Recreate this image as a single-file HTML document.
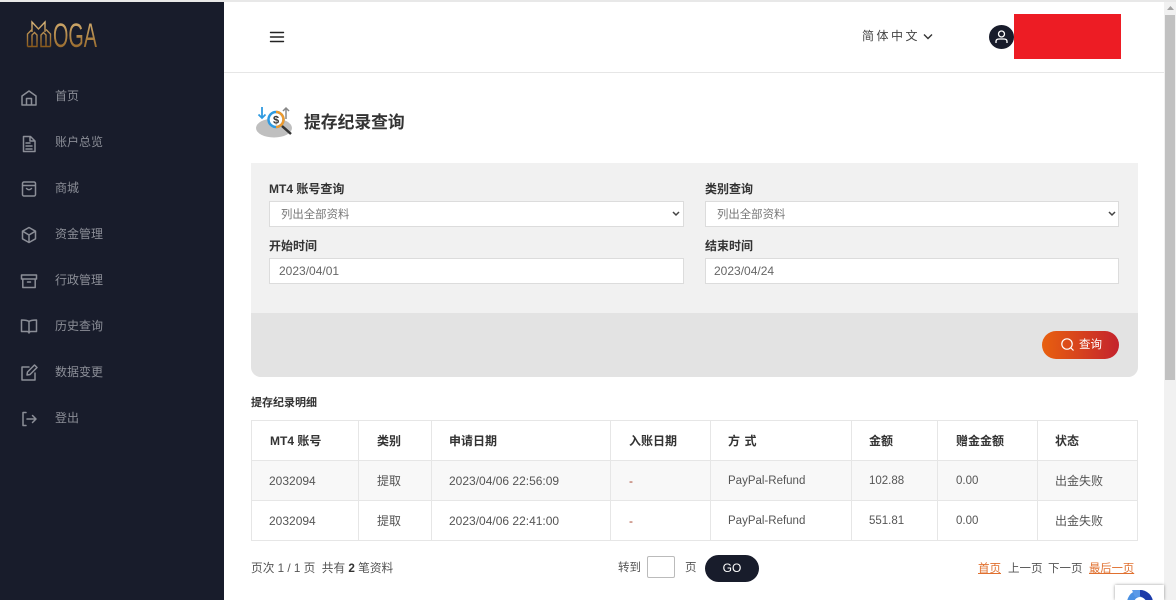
<!DOCTYPE html>
<html><head><meta charset="utf-8"><style>
*{box-sizing:border-box}
html,body{margin:0;padding:0;width:1176px;height:600px;overflow:hidden;background:#fff;font-family:"Liberation Sans","Noto Sans CJK SC",sans-serif;color:#555;font-size:12px}
.a{position:absolute;white-space:nowrap;line-height:16px}
.nav{color:#8b8e97;left:55px}
svg.i{position:absolute;left:20px;fill:none;stroke:#8b8e97;stroke-width:1.5;stroke-linecap:round;stroke-linejoin:round}
.l{position:absolute;background:#e6e6e6}
.th{font-weight:bold;color:#333}
.lb{font-weight:bold;color:#333}
.inp{position:absolute;background:#fff;border:1px solid #dcdcdc;height:27px;width:415px}
</style></head><body>
<div style="position:absolute;left:0;top:0;width:1176px;height:2px;background:#e8e8e8"></div>
<div style="position:absolute;left:0;top:2px;width:224px;height:598px;background:#181c2b"></div>
<svg style="position:absolute;left:26px;top:20px" width="72" height="28" viewBox="0 0 72 28"><defs><linearGradient id="g" x1="0" y1="0" x2="0" y2="1"><stop offset="0" stop-color="#d9b578"/><stop offset="1" stop-color="#8a5a1c"/></linearGradient></defs><path d="M1.500 26.500V14L6 9.500M6 26.500V15L8.500 12.500L11 15V26.500H1.500M6 12V2L12.500 9L19 2V12M24.500 26.500V14L20 9.500M20 26.500V15L17.500 12.500L15 15V26.500H24.500" fill="none" stroke="url(#g)" stroke-width="1.400"/><text x="27" y="27" font-family="Liberation Sans" font-size="34" fill="url(#g)" textLength="44" lengthAdjust="spacingAndGlyphs">OGA</text></svg>

<svg class="i" style="top:89px" width="18" height="18" viewBox="0 0 18 18"><path d="M2 16V7L9 2l7 5v9zM6.500 16V9.500h5V16"/></svg>
<div class="a nav" style="top:88px">首页</div>
<svg class="i" style="top:135px" width="18" height="18" viewBox="0 0 18 18"><path d="M3.500 1.500h7L15 6v10.500H3.500zM10 2v4h5M6 8h4M6 11h6M6 14h6"/></svg>
<div class="a nav" style="top:134px">账户总览</div>
<svg class="i" style="top:180px" width="18" height="18" viewBox="0 0 18 18"><rect x="2.500" y="2" width="13" height="14" rx="1.500"/><path d="M3 5.500h12M6.500 8.500q2.500 2.500 5 0"/></svg>
<div class="a nav" style="top:180px">商城</div>
<svg class="i" style="top:226px" width="18" height="18" viewBox="0 0 18 18"><path d="M9 1.500l6.500 3.700v7.600L9 16.500l-6.500-3.700V5.200zM2.800 5.300L9 9l6.200-3.700M9 9v7.300"/></svg>
<div class="a nav" style="top:226px">资金管理</div>
<svg class="i" style="top:272px" width="18" height="18" viewBox="0 0 18 18"><path d="M1.500 3h15v4h-15zM2.800 7v8.500h12.400V7M7.500 10h3"/></svg>
<div class="a nav" style="top:272px">行政管理</div>
<svg class="i" style="top:317px" width="18" height="18" viewBox="0 0 18 18"><path d="M9 4.500Q7 3 1.500 3v11.500H7q2 0 2 1.500 0-1.500 2-1.500h5.500V3Q11 3 9 4.500zV15"/></svg>
<div class="a nav" style="top:318px">历史查询</div>
<svg class="i" style="top:364px" width="18" height="18" viewBox="0 0 18 18"><path d="M9 3H2v13h13V9M7 11l.5-3L14.500 1l2.500 2.500L10 10.500z"/></svg>
<div class="a nav" style="top:364px">数据变更</div>
<svg class="i" style="top:410px" width="18" height="18" viewBox="0 0 18 18"><path d="M6 2.500H3v13h3M7 9h9M12.500 5.500L16 9l-3.500 3.500"/></svg>
<div class="a nav" style="top:410px">登出</div>

<div class="l" style="left:224px;top:72px;width:940px;height:1px"></div>
<svg style="position:absolute;left:269px;top:30px" width="16" height="14" viewBox="0 0 16 14"><path d="M1.500 2.500h13M1.500 7h13M1.500 11.500h13" stroke="#222" stroke-width="1.400" stroke-linecap="round"/></svg>
<div class="a" style="left:862px;top:28px;color:#444;letter-spacing:2.500px">简体中文</div>
<svg style="position:absolute;left:923px;top:33px" width="10" height="8" viewBox="0 0 10 8"><path d="M1 1.500l4 4 4-4" fill="none" stroke="#333" stroke-width="1.400"/></svg>
<div style="position:absolute;left:989px;top:25px;width:25px;height:24px;border-radius:50%;background:#181c2b"></div>
<svg style="position:absolute;left:994px;top:29px" width="15" height="16" viewBox="0 0 15 16"><circle cx="7.500" cy="5" r="3" fill="none" stroke="#fff" stroke-width="1.300"/><path d="M2 14v-1.500Q2 10 5 10h5q3 0 3 2.500V14" fill="none" stroke="#fff" stroke-width="1.300"/></svg>
<div style="position:absolute;left:1014px;top:14px;width:107px;height:45px;background:#ed1c24"></div>

<svg style="position:absolute;left:255px;top:104px" width="40" height="36" viewBox="0 0 40 36">
<ellipse cx="19" cy="24" rx="18" ry="9.500" fill="#bfbfbf"/>
<path d="M7 3v11M3.500 10.500L7 14l3.500-3.500" fill="none" stroke="#2f9ae0" stroke-width="1.800"/>
<path d="M31 15V4M28 7l3-3 3 3" fill="none" stroke="#888" stroke-width="1.500"/>
<circle cx="21" cy="15.500" r="7.500" fill="#fff" stroke="#2f9ae0" stroke-width="2.500"/>
<path d="M21 8a7.500 7.500 0 0 1 0 15" fill="none" stroke="#ee9a2e" stroke-width="2.500"/>
<text x="21" y="19.500" text-anchor="middle" font-size="11" font-weight="bold" fill="#333" font-family="Liberation Sans">$</text>
<path d="M27 22l9 8" stroke="#333" stroke-width="2.500"/>
</svg>
<div class="a" style="left:304px;top:111px;font-size:16.800px;line-height:24px;font-weight:bold;color:#333">提存纪录查询</div>

<div style="position:absolute;left:251px;top:163px;width:887px;height:214px;background:#f1f1f1;border-radius:0 0 10px 10px;overflow:hidden"><div style="position:absolute;left:0;top:150px;width:887px;height:64px;background:#e3e3e3"></div></div>
<div class="a lb" style="left:269px;top:181px">MT4 账号查询</div>
<div class="a lb" style="left:705px;top:181px">类别查询</div>
<div class="inp" style="left:269px;top:201px;height:26px"></div>
<div class="inp" style="left:705px;top:201px;width:414px;height:26px"></div>
<div class="a" style="left:281px;top:207px;color:#777;font-size:11.400px">列出全部资料</div>
<div class="a" style="left:717px;top:207px;color:#777;font-size:11.400px">列出全部资料</div>
<svg style="position:absolute;left:672px;top:211px" width="8" height="6" viewBox="0 0 8 6"><path d="M1 1l3 3 3-3" fill="none" stroke="#444" stroke-width="1.500"/></svg>
<svg style="position:absolute;left:1108px;top:211px" width="8" height="6" viewBox="0 0 8 6"><path d="M1 1l3 3 3-3" fill="none" stroke="#444" stroke-width="1.500"/></svg>
<div class="a lb" style="left:269px;top:238px">开始时间</div>
<div class="a lb" style="left:705px;top:238px">结束时间</div>
<div class="inp" style="left:269px;top:258px;height:26px"></div>
<div class="inp" style="left:705px;top:258px;width:414px;height:26px"></div>
<div class="a" style="left:279px;top:263px;color:#666">2023/04/01</div>
<div class="a" style="left:714px;top:263px;color:#666">2023/04/24</div>

<div style="position:absolute;left:1042px;top:331px;width:77px;height:28px;border-radius:14px;background:linear-gradient(90deg,#e8600f,#c4232d)"></div>
<svg style="position:absolute;left:1060px;top:337px" width="15" height="15" viewBox="0 0 15 15"><circle cx="7" cy="7" r="5.200" fill="none" stroke="#fff" stroke-width="1.200"/><path d="M11 11l2.500 2.500" stroke="#fff" stroke-width="1.200"/></svg>
<div class="a" style="left:1079px;top:337px;color:#fff;font-size:11.500px">查询</div>

<div class="a lb" style="left:251px;top:395px;font-size:11px">提存纪录明细</div>

<div style="position:absolute;left:251px;top:461px;width:887px;height:39px;background:#f8f8f8"></div>
<div class="l" style="left:251px;top:420px;width:887px;height:1px"></div>
<div class="l" style="left:251px;top:460px;width:887px;height:1px"></div>
<div class="l" style="left:251px;top:500px;width:887px;height:1px"></div>
<div class="l" style="left:251px;top:540px;width:887px;height:1px"></div>
<div class="l" style="left:251px;top:420px;width:1px;height:121px"></div>
<div class="l" style="left:358px;top:420px;width:1px;height:121px"></div>
<div class="l" style="left:431px;top:420px;width:1px;height:121px"></div>
<div class="l" style="left:610px;top:420px;width:1px;height:121px"></div>
<div class="l" style="left:710px;top:420px;width:1px;height:121px"></div>
<div class="l" style="left:851px;top:420px;width:1px;height:121px"></div>
<div class="l" style="left:937px;top:420px;width:1px;height:121px"></div>
<div class="l" style="left:1037px;top:420px;width:1px;height:121px"></div>
<div class="l" style="left:1137px;top:420px;width:1px;height:121px"></div>

<div class="a th" style="left:270px;top:433px">MT4 账号</div>
<div class="a th" style="left:377px;top:433px">类别</div>
<div class="a th" style="left:449px;top:433px">申请日期</div>
<div class="a th" style="left:629px;top:433px">入账日期</div>
<div class="a th" style="left:728px;top:433px;letter-spacing:.6px">方 式</div>
<div class="a th" style="left:869px;top:433px">金额</div>
<div class="a th" style="left:956px;top:433px">赠金金额</div>
<div class="a th" style="left:1055px;top:433px">状态</div>

<div class="a" style="left:269px;top:473px">2032094</div>
<div class="a" style="left:377px;top:473px">提取</div>
<div class="a" style="left:449px;top:473px">2023/04/06 22:56:09</div>
<div class="a" style="left:629px;top:473px;color:#a5402a">-</div>
<div class="a" style="left:728px;top:473px;font-size:11.500px">PayPal-Refund</div>
<div class="a" style="left:869px;top:473px;font-size:11.500px">102.88</div>
<div class="a" style="left:956px;top:473px;font-size:11.500px">0.00</div>
<div class="a" style="left:1055px;top:473px">出金失败</div>

<div class="a" style="left:269px;top:513px">2032094</div>
<div class="a" style="left:377px;top:513px">提取</div>
<div class="a" style="left:449px;top:513px">2023/04/06 22:41:00</div>
<div class="a" style="left:629px;top:513px;color:#a5402a">-</div>
<div class="a" style="left:728px;top:513px;font-size:11.500px">PayPal-Refund</div>
<div class="a" style="left:869px;top:513px;font-size:11.500px">551.81</div>
<div class="a" style="left:956px;top:513px;font-size:11.500px">0.00</div>
<div class="a" style="left:1055px;top:513px">出金失败</div>

<div class="a" style="left:251px;top:561px;font-size:11.700px">页次 1 / 1 页&nbsp; 共有 <b style="color:#333">2</b> 笔资料</div>
<div class="a" style="left:618px;top:560px;font-size:11.500px">转到</div>
<div style="position:absolute;left:647px;top:556px;width:28px;height:22px;border:1px solid #bbb;border-radius:2px;background:#fff"></div>
<div class="a" style="left:685px;top:560px;font-size:11.500px">页</div>
<div class="a" style="left:705px;top:555px;width:54px;height:27px;border-radius:14px;background:#181c2b;color:#fff;text-align:center;line-height:27px">GO</div>
<div class="a" style="left:978px;top:561px;font-size:11.500px;color:#e0702f;text-decoration:underline">首页</div>
<div class="a" style="left:1008px;top:561px;font-size:11.500px">上一页</div>
<div class="a" style="left:1048px;top:561px;font-size:11.500px">下一页</div>
<div class="a" style="left:1089px;top:561px;font-size:11.300px;color:#e0702f;text-decoration:underline">最后一页</div>

<div style="position:absolute;left:1164px;top:2px;width:12px;height:598px;background:#f1f1f1"></div>
<div style="position:absolute;left:1165px;top:15px;width:10px;height:365px;background:#c1c1c1"></div>
<svg style="position:absolute;left:1166px;top:5px" width="9" height="6" viewBox="0 0 9 6"><path d="M1 5l3.500-4 3.500 4z" fill="#a3a3a3"/></svg>

<div style="position:absolute;left:1115px;top:585px;width:49px;height:15px;background:#fff;box-shadow:0 0 3px rgba(0,0,0,.4);overflow:hidden">
<svg style="position:absolute;left:11px;top:4px" width="28" height="28" viewBox="0 0 28 28"><circle cx="14" cy="14" r="13" fill="#4a90e2"/><path d="M14 1a13 13 0 0 1 13 13h-10l3-3-6-4z" fill="#1c3aa9"/><circle cx="14" cy="14" r="6" fill="#fff"/><path d="M6 1h8v7H9z" fill="#5a9ae8"/></svg></div>
</body></html>
